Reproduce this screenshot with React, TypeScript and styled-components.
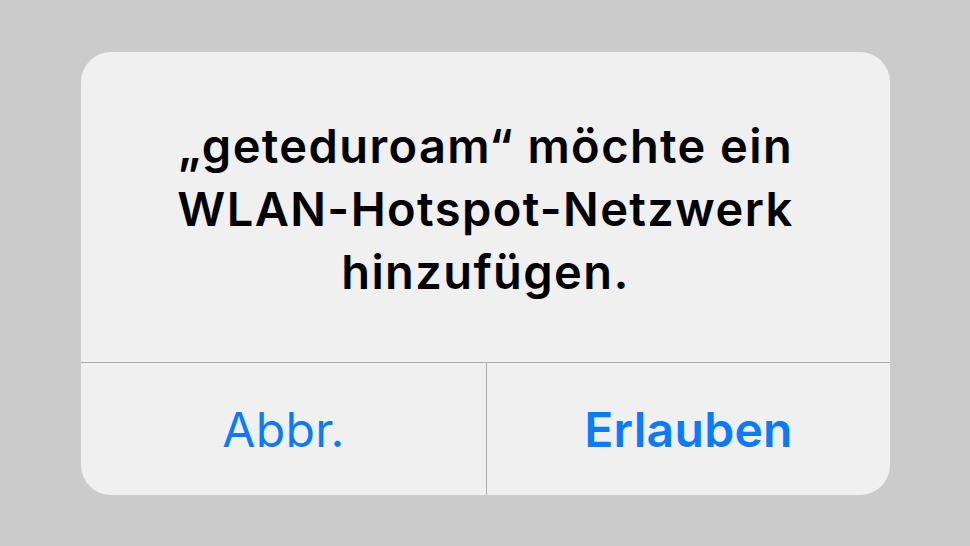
import React from "react";
import styled, { createGlobalStyle } from "styled-components";

const GlobalStyle = createGlobalStyle`
  html, body {
    margin: 0;
    padding: 0;
    background: #cbcbcb;
  }
  body {
    font-family: Inter, "Noto Sans", "Liberation Sans", sans-serif;
  }
`;

const Page = styled.div`
  width: 970px;
  height: 546px;
  display: flex;
  align-items: flex-start;
  padding: 52px 0 0 81px;
  box-sizing: border-box;
`;

const Dialog = styled.div`
  width: 809px;
  height: 443px;
  background: #f0f0f0;
  border-radius: 30px;
  display: grid;
  grid-template-rows: 311px 1fr;
  overflow: hidden;
`;

const Message = styled.div`
  display: flex;
  align-items: center;
  justify-content: center;
  padding: 2px 20px 0;
  border-bottom: 1px solid #ababab;
  text-align: center;
  font-size: 47px;
  font-weight: 600;
  line-height: 63px;
  color: #000;
  letter-spacing: 1.4px;
`;

const Actions = styled.div`
  display: grid;
  grid-template-columns: 405px 1fr;
`;

const Action = styled.button<{ $primary?: boolean }>`
  border: 0;
  background: transparent;
  font-family: inherit;
  font-size: 48px;
  font-weight: ${(p) => (p.$primary ? 600 : 400)};
  letter-spacing: 0.3px;
  color: #0a7aff;
  padding: 0;
  cursor: pointer;
  & + & {
    border-left: 1px solid #ababab;
  }
`;

export default function App() {
  return (
    <>
      <GlobalStyle />
      <Page>
        <Dialog>
          <Message>
            „geteduroam“ möchte ein
            <br />
            WLAN-Hotspot-Netzwerk
            <br />
            hinzufügen.
          </Message>
          <Actions>
            <Action>Abbr.</Action>
            <Action $primary>Erlauben</Action>
          </Actions>
        </Dialog>
      </Page>
    </>
  );
}
